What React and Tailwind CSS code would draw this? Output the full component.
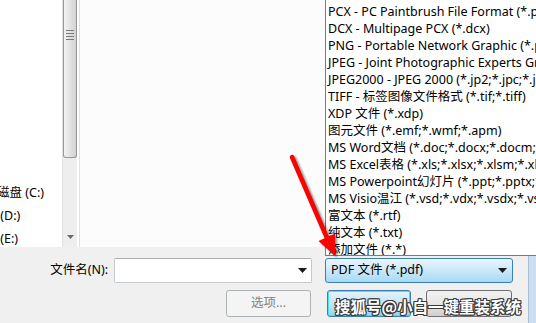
export default function App() {
  const items = [
    "PCX - PC Paintbrush File Format (*.pcx)",
    "DCX - Multipage PCX (*.dcx)",
    "PNG - Portable Network Graphic (*.png)",
    "JPEG - Joint Photographic Experts Group (*.jpg;*.jpeg)",
    "JPEG2000 - JPEG 2000 (*.jp2;*.jpc;*.j2k)",
    "TIFF - 标签图像文件格式 (*.tif;*.tiff)",
    "XDP 文件 (*.xdp)",
    "图元文件 (*.emf;*.wmf;*.apm)",
    "MS Word文档 (*.doc;*.docx;*.docm;*.dot)",
    "MS Excel表格 (*.xls;*.xlsx;*.xlsm;*.xlt;*.xltx)",
    "MS Powerpoint幻灯片 (*.ppt;*.pptx;*.pps)",
    "MS Visio温江 (*.vsd;*.vdx;*.vsdx;*.vsdm)",
    "富文本 (*.rtf)",
    "纯文本 (*.txt)",
    "添加文件 (*.*)",
  ];

  const Arrow = () => (
    <svg width="9" height="5" viewBox="0 0 9 5">
      <path d="M0 0 H9 L4.5 5 Z" fill="#1a1a1a" />
    </svg>
  );

  return (
    <div className="relative w-[536px] h-[323px] overflow-hidden bg-[#f0f0f0] text-[12.5px] text-black font-['Noto_Sans','Noto_Sans_CJK_SC',sans-serif]">
      {/* top area */}
      <div className="flex h-[247px]">
        <div className="w-[62px] bg-white overflow-hidden pt-[181px]">
          <div className="h-[23px] leading-[23px] whitespace-nowrap ml-[-28px]">本地磁盘 (C:)</div>
          <div className="h-[23px] leading-[23px] whitespace-nowrap ml-[-28px]">软件 (D:)</div>
          <div className="h-[23px] leading-[23px] whitespace-nowrap ml-[-28px]">文档 (E:)</div>
        </div>
        <div className="w-[15px] flex flex-col bg-[#eeeeee] border-l border-[#e2e2e2]">
          <div className="h-[158px] border border-t-0 border-[#979797] rounded-b-[3px] bg-gradient-to-r from-[#f3f3f3] to-[#d2d2d2] flex justify-center pt-[30px]">
            <div className="flex flex-col gap-[2px] w-[8px]">
              <div className="h-px bg-[#7a7a7a]" />
              <div className="h-px bg-[#7a7a7a]" />
              <div className="h-px bg-[#7a7a7a]" />
              <div className="h-px bg-[#7a7a7a]" />
            </div>
          </div>
          <div className="flex-1" />
          <div className="h-[17px] flex items-center justify-center pb-[4px]">
            <svg width="7" height="4" viewBox="0 0 7 4">
              <path d="M0 0 H7 L3.5 4 Z" fill="#6b6b6b" />
            </svg>
          </div>
        </div>
        <div className="w-[2px] bg-white" />
        <div className="w-px bg-[#d8e2ea]" />
        <div className="flex-1 bg-[#fcfcfc]" />
      </div>

      {/* bottom area */}
      <div className="flex h-[76px]">
        <div className="flex-1 flex flex-col pt-[11px]">
          <div className="h-[25px] flex items-center">
            <div className="w-[108px] text-right whitespace-nowrap">文件名(N):</div>
            <div className="ml-[6px] w-[198px] h-full bg-white border border-[#c5cad1] border-t-[#abadb3] rounded-[2px] flex items-center justify-end pr-[4px]">
              <Arrow />
            </div>
            <div className="ml-[13px] w-[188px] h-full rounded-[3px] border border-[#3c7fb1] bg-gradient-to-b from-[#eaf6fd] via-[#c9e8fa] to-[#a7d9f5] flex items-center justify-between pl-[5px] pr-[5px]">
              <span className="whitespace-nowrap">PDF 文件 (*.pdf)</span>
              <Arrow />
            </div>
          </div>
          <div className="mt-[7px] h-[27px] flex">
            <div className="ml-[226px] w-[85px] h-full rounded-[3px] border border-[#adb2b5] bg-[#f4f4f4] flex items-center justify-center text-[#838383]">
              选项...
            </div>
            <div className="ml-[16px] w-[84px] h-full rounded-[3px] border border-[#3c7fb1] bg-gradient-to-b from-[#e5f4fc] via-[#c4e5f6] to-[#98d1ef] shadow-[inset_0_0_0_1px_#48e0fd]" />
            <div className="ml-[15px] w-[86px] h-full rounded-[3px] border border-[#707070] bg-gradient-to-b from-[#f2f2f2] via-[#e6e6e6] to-[#cfcfcf]" />
          </div>
        </div>
        <div className="w-[8px] bg-[#cddff0] border-l border-[#a9bfd5]" />
      </div>

      {/* dropdown list */}
      <div className="absolute left-[325px] top-0 w-[215px] h-[256px] bg-white border-l border-b border-[#7a7a7a] pl-[2px] pt-[3px] overflow-hidden">
        {items.map((t) => (
          <div key={t} className="h-[17px] leading-[17px] whitespace-nowrap">
            {t}
          </div>
        ))}
      </div>

      {/* red arrow */}
      <svg className="absolute left-0 top-0 pointer-events-none" width="536" height="323" viewBox="0 0 536 323">
        <defs>
          <filter id="sh" x="-20%" y="-20%" width="140%" height="140%">
            <feGaussianBlur stdDeviation="1.2" />
          </filter>
        </defs>
        <g transform="translate(2,1.5)" opacity="0.45" filter="url(#sh)">
          <path d="M292 157 L327 238" stroke="#000" strokeWidth="4.5" strokeLinecap="round" />
          <path d="M335 256 L318.5 241 L335 233.5 Z" fill="#000" />
        </g>
        <path d="M292 157 L327 238" stroke="#ff0000" strokeWidth="4.5" strokeLinecap="round" />
        <path d="M335 256 L318.5 241 L335 233.5 Z" fill="#ff0000" />
      </svg>

      {/* watermark */}
      <div className="absolute left-[335px] top-[297px] text-[15.5px] leading-[18px] font-bold text-white whitespace-nowrap font-['Noto_Sans_CJK_SC',sans-serif] [text-shadow:1px_0_0_#3a3a3a,-1px_0_0_#3a3a3a,0_1px_0_#3a3a3a,0_-1px_0_#3a3a3a,1px_1px_0_#3a3a3a,-1px_-1px_0_#3a3a3a,1px_-1px_0_#3a3a3a,-1px_1px_0_#3a3a3a]">
        搜狐号@小白一键重装系统
      </div>
    </div>
  );
}
